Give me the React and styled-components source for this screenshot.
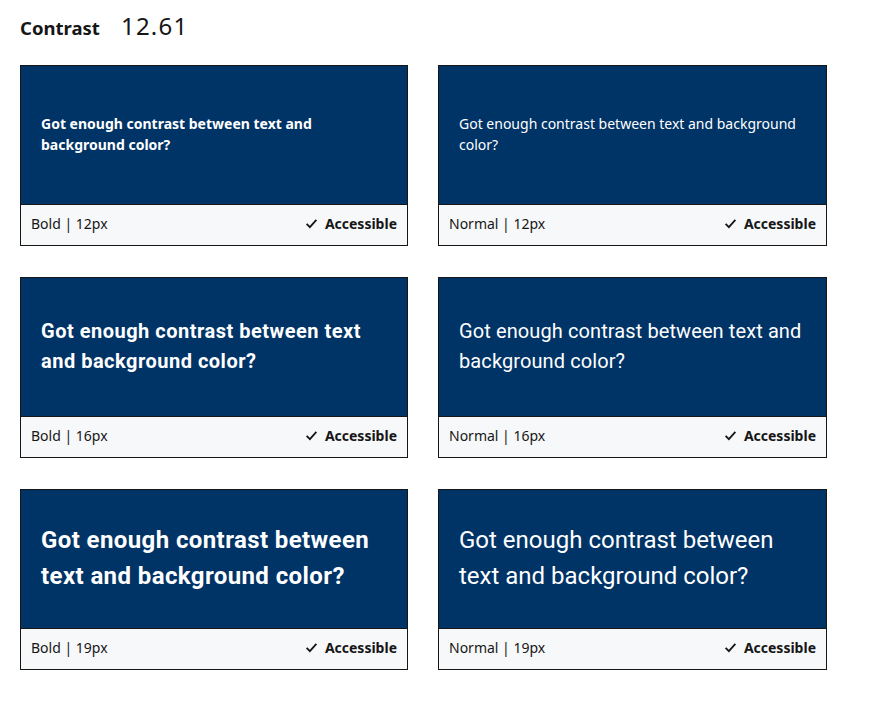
import React from 'react'
import styled, { createGlobalStyle } from 'styled-components'

const GlobalStyle = createGlobalStyle`
    body {
        margin: 0;
        background: #fff;
        font-family: "Noto Sans", Roboto, sans-serif;
        color: #161616;
    }
`

// px = rendered size, spacing tuned so lines wrap like the original
const samples = [
    { weight: 'Bold', size: 12, px: 14, spacing: 0 },
    { weight: 'Normal', size: 12, px: 14, spacing: 0 },
    { weight: 'Bold', size: 16, px: 20, spacing: 0.5 },
    { weight: 'Normal', size: 16, px: 20, spacing: 0.1 },
    { weight: 'Bold', size: 19, px: 24, spacing: 0.4 },
    { weight: 'Normal', size: 19, px: 24, spacing: 0 },
]

function Check() {
    return (
        <svg width="13" height="13" viewBox="0 0 16 16" fill="none">
            <path d="M2 8.5l4 4 8-9" stroke="#161616" strokeWidth="2.2" />
        </svg>
    )
}

function App() {
    return (
        <Page>
            <GlobalStyle />
            <Header>
                <Label>Contrast</Label>
                <Ratio>12.61</Ratio>
            </Header>
            <Grid>
                {samples.map((s, i) => (
                    <Card key={i}>
                        <Preview>
                            <Sample $bold={s.weight === 'Bold'} $px={s.px} $spacing={s.spacing}>
                                Got enough contrast between text and background color?
                            </Sample>
                        </Preview>
                        <Footer>
                            <span>{s.weight} | {s.size}px</span>
                            <Status><Check />Accessible</Status>
                        </Footer>
                    </Card>
                ))}
            </Grid>
        </Page>
    )
}

const Page = styled.div`
    padding: 9px 20px 20px;
`

const Header = styled.div`
    display: flex;
    align-items: baseline;
    height: 28px;
    margin-bottom: 28px;
`

const Label = styled.span`
    font-weight: 700;
    font-size: 18.5px;
    width: 101px;
`

const Ratio = styled.span`
    font-size: 24px;
    letter-spacing: 1.2px;
`

const Grid = styled.div`
    display: grid;
    grid-template-columns: 388px 389px;
    column-gap: 30px;
    row-gap: 31px;
`

const Card = styled.div`
    border: 1px solid #161616;
    display: flex;
    flex-direction: column;
`

const Preview = styled.div`
    box-sizing: border-box;
    background: #003366;
    height: 139px;
    display: flex;
    align-items: center;
    padding: 0 20px 2px;
    border-bottom: 1px solid #161616;
`

const Sample = styled.p`
    margin: 0;
    color: #fff;
    font-family: ${p => (p.$px > 14 ? 'Roboto, "Noto Sans"' : '"Noto Sans", Roboto')}, sans-serif;
    font-size: ${p => p.$px}px;
    letter-spacing: ${p => p.$spacing}px;
    line-height: 1.5;
    font-weight: ${p => (p.$bold ? 700 : 400)};
`

const Footer = styled.div`
    height: 40px;
    box-sizing: border-box;
    padding: 0 10px 4px;
    background: #f7f8fa;
    display: flex;
    align-items: center;
    justify-content: space-between;
    font-size: 14px;
`

const Status = styled.span`
    display: flex;
    align-items: center;
    gap: 7px;
    font-weight: 700;
`

export default App
